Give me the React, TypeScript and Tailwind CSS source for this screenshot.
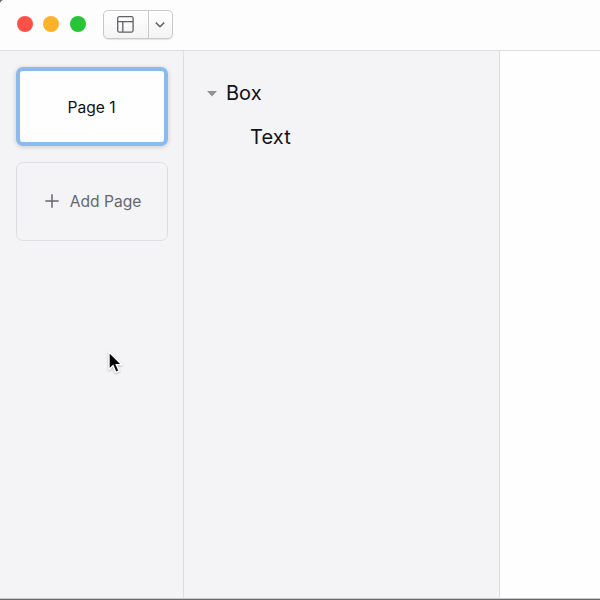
import React from "react";

function Dot({ color }: { color: string }) {
  return <span className={`size-4 rounded-full ${color}`} />;
}

function Toolbar() {
  return (
    <header className="flex h-[51px] shrink-0 border-b border-[#dcdcde] bg-[#fefdfe] pl-[17px] pt-[10px]">
      <div className="flex h-7 items-center gap-[10.3px]">
        <Dot color="bg-[#fc5149]" />
        <Dot color="bg-[#fcb32b]" />
        <Dot color="bg-[#27c438]" />
      </div>
      <div className="ml-[17.4px] flex h-[29px] w-[70px] overflow-hidden rounded-[5px] border border-[#c9c9cb] bg-linear-to-b from-white to-[#f5f4f5] shadow-[0_1px_1px_rgba(0,0,0,0.1)]">
        <button className="flex w-[45px] items-center justify-center border-r border-[#c9c9cb]">
          <svg width="17" height="17" viewBox="0 0 17 17" fill="none" stroke="#606267" strokeWidth="1.3">
            <rect x=".7" y=".7" width="15.4" height="15.4" rx="1.5" />
            <path d="M1 5.6H16M5.8 5.6V16" />
          </svg>
        </button>
        <button className="flex flex-1 items-center justify-center pt-[1px]">
          <svg width="10" height="6" viewBox="0 0 10 6" fill="none" stroke="#606267" strokeWidth="1.5">
            <path d="M.8 .6L5 4.8L9.2 .6" />
          </svg>
        </button>
      </div>
    </header>
  );
}

export default function App() {
  return (
    <div className="relative flex h-[600px] w-[600px] flex-col overflow-hidden bg-[#f4f3f6] font-['Inter','Liberation_Sans',sans-serif] text-[#111216]">
      <Toolbar />
      <main className="flex min-h-0 flex-1">
        <aside className="flex w-[184px] shrink-0 flex-col gap-4 border-r border-[#dedfe2] pl-4 pt-4">
          <div className="flex h-[79px] w-[152px] items-center justify-center rounded-[7px] border-4 border-[#8abbec] bg-[#fefefe] pr-px pt-[3px] text-[15.6px] leading-none shadow-[0_1px_5px_rgba(0,0,0,0.18)]">
            Page 1
          </div>
          <button className="flex h-[79px] w-[152px] items-center justify-center gap-[11px] rounded-[7px] border border-[#dedfe2] pb-px pl-[2px] text-[15.6px] leading-none text-[#65686c]">
            <svg width="14" height="14" viewBox="0 0 14 14" stroke="#65686c" strokeWidth="1.5">
              <path d="M.3 7H13.7M7 .3V13.7" />
            </svg>
            <span className="pt-[2px]">Add Page</span>
          </button>
        </aside>
        <section className="flex w-[316px] shrink-0 flex-col border-r border-[#dcdde0] pl-[23px] pt-[21px] text-[20px] leading-[43px]">
          <div className="flex h-[44px] items-start gap-[9.5px]">
            <svg className="mt-[19px]" width="10" height="6" viewBox="0 0 10 6" fill="#909598">
              <path d="M0 0H10L5 5.5Z" />
            </svg>
            <span className="-ml-[0.5px]">Box</span>
          </div>
          <div className="h-[43px] pl-[43px] tracking-[0.15px]">Text</div>
        </section>
        <div className="flex-1 bg-[#fefefe]" />
      </main>
      <footer className="h-[2px] shrink-0 border-t border-[#c9c9ca] bg-[#69686a]" />
      <svg className="absolute left-0 top-0" width="4" height="4" viewBox="0 0 4 4">
        <path d="M0 0H3Q.6 .6 0 3Z" fill="#606064" />
      </svg>
      <svg className="absolute left-[107px] top-[350px] drop-shadow-[0_1px_1px_rgba(0,0,0,0.25)]" width="16" height="25" viewBox="0 0 16 25">
        <path d="M2 2V19.4L6 15.7L8.9 22.4L12.1 21L9.3 14.6H14.6Z" fill="#050505" stroke="#fff" strokeWidth="1.4" />
      </svg>
    </div>
  );
}
